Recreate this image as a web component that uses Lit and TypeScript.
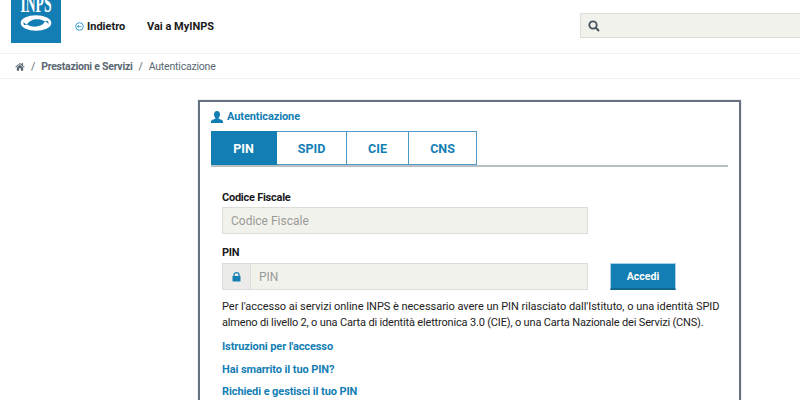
import { LitElement, html, css } from "lit";
import { customElement } from "lit/decorators.js";

@customElement("app-root")
export class AppRoot extends LitElement {
  static styles = css`
    :host {
      display: block;
      width: 800px;
      height: 400px;
      overflow: hidden;
      background: #fff;
      font-family: Roboto, "Liberation Sans", sans-serif;
      color: #1a1a1a;
    }
    * { box-sizing: border-box; }
    .top {
      height: 54px;
      display: flex;
      border-bottom: 1px solid #f1f1ec;
      padding-left: 11px;
    }
    .logo {
      width: 50px;
      height: 43px;
      background: #137eb3;
      overflow: hidden;
    }
    .logo svg { display: block; }
    .logo-text {
      font: 700 25px "Liberation Serif", serif;
      fill: #fff;
    }
    .nav {
      display: flex;
      align-items: center;
      height: 52px;
      font-size: 11px;
      font-weight: 700;
      padding-left: 14px;
    }
    .back { display: flex; align-items: center; gap: 3px; width: 72px; }
    .search {
      margin-left: auto;
      width: 220px;
      height: 25px;
      margin-top: 13px;
      background: #f2f2ed;
      border-top: 1px solid #dcdcd8;
      border-left: 1px solid #dcdcd8;
      border-bottom: 1px solid #dcdcd8;
      display: flex;
      align-items: center;
      padding-left: 7px;
    }
    .crumbs {
      height: 25px;
      border-bottom: 1px solid #f1f1ec;
      display: flex;
      align-items: center;
      padding-left: 15px;
      font-size: 10.5px;
      letter-spacing: -0.2px;
      color: #5a6772;
    }
    .crumbs .sep { margin: 0 6px; }
    .crumbs b { font-weight: 700; color: #5a6772; letter-spacing: -0.25px; }
    .main { display: flex; padding: 21px 0 0 198px; }
    .card {
      width: 543px;
      height: 320px;
      border: 2px solid #65727d;
      box-shadow: 0 0 0 1px #eef1f3;
      padding: 7px 11px 0 11px;
    }
    .title {
      display: flex;
      align-items: center;
      gap: 4px;
      height: 15px;
      color: #137eb3;
      font-size: 11px;
      font-weight: 700;
      letter-spacing: -0.1px;
    }
    .tabs {
      display: flex;
      margin-top: 7px;
      height: 36px;
      border-bottom: 2px solid #b9c0c4;
      width: 517px;
    }
    .tab {
      height: 34px;
      border: 1px solid #4d9bc4;
      border-left: 0;
      color: #137eb3;
      font-size: 12.5px;
      font-weight: 700;
      display: flex;
      align-items: center;
      justify-content: center;
    }
    .tab.on { background: #137eb3; color: #fff; border-color: #137eb3; }
    .form { padding: 24px 0 0 11px; width: 506px; }
    label {
      display: block;
      font-size: 11px;
      font-weight: 700;
      line-height: 14px;
      letter-spacing: -0.25px;
    }
    .field {
      height: 27px;
      background: #f2f2ed;
      border: 1px solid #dcdcd8;
      margin-top: 2px;
      color: #9a9a96;
      font-size: 12px;
      display: flex;
      align-items: center;
      padding-left: 8px;
      width: 366px;
    }
    .f2 { margin-top: 12px; }
    .row { display: flex; margin-top: 3px; }
    .row .field { margin-top: 0; padding: 0; }
    .addon {
      width: 28px;
      height: 25px;
      background: #ececea;
      border-right: 1px solid #dcdcd8;
      display: flex;
      align-items: center;
      justify-content: center;
    }
    .pin { padding-left: 8px; }
    .btn {
      margin-left: 22px;
      width: 66px;
      height: 27px;
      background: #137eb3;
      border: 1px solid #a8d3ea;
      border-bottom: 2px solid #0f668f;
      color: #fff;
      font-size: 10.5px;
      font-weight: 700;
      display: flex;
      align-items: center;
      justify-content: center;
    }
    p {
      margin: 9px 0 0 0;
      font-size: 11px;
      line-height: 16px;
      white-space: nowrap;
      color: #222;
      letter-spacing: -0.03px;
    }
    .tight { letter-spacing: -0.17px; }
    .link {
      display: block;
      color: #137eb3;
      font-size: 11px;
      font-weight: 700;
      line-height: 15px;
      margin-top: 7.5px;
      letter-spacing: -0.1px;
    }
    .link.first { margin-top: 8px; }
  `;

  render() {
    return html`
      <div class="top">
        <div class="logo">
          <svg width="50" height="43" viewBox="0 0 50 43">
            <text class="logo-text" x="25" y="12" text-anchor="middle" textLength="31" lengthAdjust="spacingAndGlyphs">INPS</text>
            <ellipse cx="25" cy="23" rx="14" ry="6.5" fill="none" stroke="#fff" stroke-width="2.6"/>
            <path d="M11 21 C15 15 33 15 39 21 L33 21 C28 18 18 19 16 25 Z" fill="#fff"/>
            <path d="M39 25 C35 31 17 31 11 25 L17 25 C22 28 32 27 34 21 Z" fill="#fff"/>
          </svg>
        </div>
        <div class="nav">
          <span class="back">
            <svg width="9" height="9" viewBox="0 0 9 9">
              <circle cx="4.5" cy="4.5" r="3.8" fill="none" stroke="#3d9fd3" stroke-width="1"/>
              <path d="M2.5 4.5 H6.5 M2.5 4.5 L4 3.2 M2.5 4.5 L4 5.8" fill="none" stroke="#3d9fd3" stroke-width="0.9"/>
            </svg>
            Indietro
          </span>
          <span>Vai a MyINPS</span>
        </div>
        <div class="search">
          <svg width="12" height="12" viewBox="0 0 12 12">
            <circle cx="5" cy="5" r="3.7" fill="none" stroke="#45525c" stroke-width="1.8"/>
            <path d="M7.8 7.8 L11 11" stroke="#45525c" stroke-width="2"/>
          </svg>
        </div>
      </div>
      <div class="crumbs">
        <svg width="10" height="9" viewBox="0 0 11 10">
          <path d="M5.5 1 L0.3 5.4 L1 6 L5.5 2.3 L10 6 L10.7 5.4 L8.8 3.8 V1.2 H7.5 V2.6 Z M2 6 V9.6 H4.5 V7 H6.5 V9.6 H9 V6 L5.5 3.1 Z" fill="#5a6772"/>
        </svg>
        <span class="sep">/</span><b>Prestazioni e Servizi</b><span class="sep">/</span><span>Autenticazione</span>
      </div>
      <div class="main">
        <div class="card">
          <div class="title">
            <svg width="12" height="12" viewBox="0 0 12 12">
              <path d="M6 0 C8 0 9 1.4 9 3.4 C9 5 8.3 6.2 7.6 6.9 L7.7 7.8 C9.5 8.4 12 9 12 10.4 V12 H0 V10.4 C0 9 2.5 8.4 4.3 7.8 L4.4 6.9 C3.7 6.2 3 5 3 3.4 C3 1.4 4 0 6 0 Z" fill="#137eb3"/>
            </svg>
            Autenticazione
          </div>
          <div class="tabs">
            <div class="tab on" style="width:66px">PIN</div>
            <div class="tab" style="width:70px">SPID</div>
            <div class="tab" style="width:62px">CIE</div>
            <div class="tab" style="width:68px">CNS</div>
          </div>
          <div class="form">
            <label>Codice Fiscale</label>
            <div class="field">Codice Fiscale</div>
            <label class="f2">PIN</label>
            <div class="row">
              <div class="field">
                <div class="addon">
                  <svg width="9" height="10" viewBox="0 0 9 10">
                    <path d="M2 4 V2.8 C2 0 7 0 7 2.8 V4" fill="none" stroke="#137eb3" stroke-width="1.3"/>
                    <rect x="0.5" y="4" width="8" height="5.5" rx="0.6" fill="#137eb3"/>
                  </svg>
                </div>
                <span class="pin">PIN</span>
              </div>
              <div class="btn">Accedi</div>
            </div>
            <p>Per l'accesso ai servizi online INPS è necessario avere un PIN rilasciato dall'Istituto, o una identità SPID<br /><span class="tight">almeno di livello 2, o una Carta di identità elettronica 3.0 (CIE), o una Carta Nazionale dei Servizi (CNS).</span></p>
            <a class="link first">Istruzioni per l'accesso</a>
            <a class="link">Hai smarrito il tuo PIN?</a>
            <a class="link">Richiedi e gestisci il tuo PIN</a>
          </div>
        </div>
      </div>
    `;
  }
}
